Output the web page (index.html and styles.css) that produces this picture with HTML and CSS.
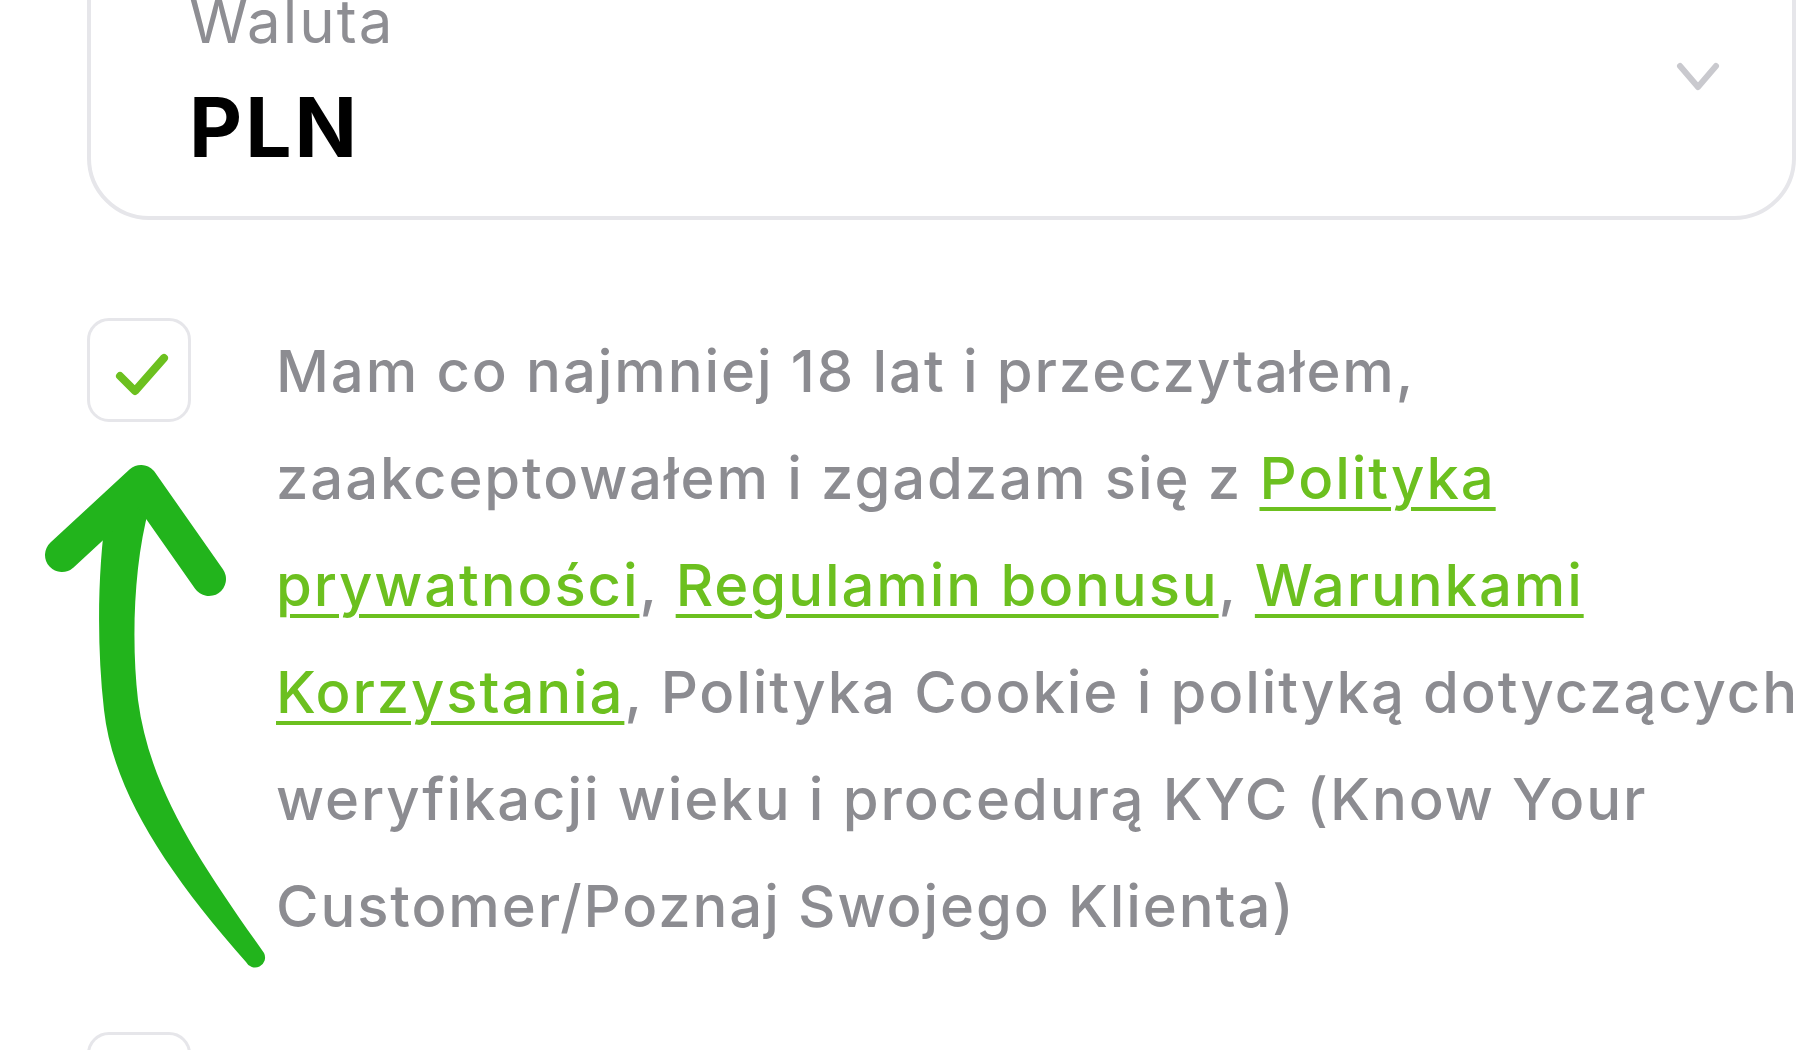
FILE: index.html
```html
<!DOCTYPE html>
<html lang="pl">
<head>
    <meta charset="UTF-8">
    <meta name="viewport" content="width=device-width, initial-scale=1.0">
    <title>Rejestracja</title>
    <link rel="stylesheet" href="styles.css">
</head>
<body>
    <main class="form">
        <div class="field">
            <div class="field-text">
                <span class="field-label">Waluta</span>
                <span class="field-value">PLN</span>
            </div>
            <svg class="chevron" width="44" height="30" viewBox="0 0 44 30">
                <polyline points="4,5 22,26 40,5" fill="none" stroke="#c9c9ce" stroke-width="6" stroke-linecap="round" stroke-linejoin="round"/>
            </svg>
        </div>

        <label class="consent">
            <span class="check checked">
                <svg width="98" height="98" viewBox="0 0 98 98">
                    <polyline points="30,55 45,70 74,37" fill="none" stroke="#6cc01f" stroke-width="8" stroke-linecap="round" stroke-linejoin="round"/>
                </svg>
            </span>
            <span class="consent-text">
                Mam co najmniej 18 lat i przeczytałem, zaakceptowałem i zgadzam się z <a href="#">Polityka prywatności</a>, <a href="#">Regulamin bonusu</a>, <a href="#">Warunkami Korzystania</a>, Polityka Cookie i polityką dotyczących weryfikacji wieku i procedurą KYC (Know Your Customer/Poznaj Swojego Klienta)
            </span>
        </label>

        <label class="consent">
            <span class="check"></span>
            <span class="consent-text"></span>
        </label>
    </main>

    <!-- strzałka wskazująca checkbox -->
    <svg class="hint-arrow" width="300" height="1000" viewBox="0 0 300 1000">
        <path d="M108 500 C 98 560, 96 640, 104 710 C 113 790, 165 870, 246 962 A 10 10 0 0 0 264 953 C 200 862, 150 790, 138 700 C 131 640, 134 560, 150 505 Z" fill="#22b41c"/>
        <polyline points="62,555 141,482 209,579" fill="none" stroke="#22b41c" stroke-width="34" stroke-linecap="round" stroke-linejoin="round"/>
    </svg>
</body>
</html>
```

FILE: styles.css
```css
/* Général */
* {
    margin: 0;
    padding: 0;
    box-sizing: border-box;
}

body {
    font-family: 'Inter', 'Noto Sans', sans-serif;
    background-color: #fff;
    color: #000;
    overflow: hidden;
}

.form {
    margin-top: -60px;
    padding: 0 0 0 87px;
}

/* Pole wyboru waluty */
.field {
    display: flex;
    align-items: center;
    justify-content: space-between;
    margin-right: 4px;
    border: 4px solid #e6e6ea;
    border-radius: 62px;
    padding: 42px 72px 38px 98px;
}

.field-text {
    display: flex;
    flex-direction: column;
    gap: 22px;
}

.field-label {
    font-size: 60px;
    line-height: 70px;
    letter-spacing: 2px;
    color: #8e8e93;
}

.field-value {
    font-size: 82px;
    line-height: 100px;
    font-weight: 700;
    letter-spacing: 3px;
    color: #000;
}

.chevron {
    margin-top: -12px;
}

/* Zgody */
.consent {
    display: flex;
    align-items: flex-start;
    gap: 85px;
    margin-top: 98px;
}

.consent + .consent {
    margin-top: 72px;
}

.check {
    flex: none;
    width: 104px;
    height: 104px;
    border: 3px solid #e6e6ea;
    border-radius: 22px;
    background-color: #fff;
}

.consent-text {
    font-size: 58px;
    line-height: 107px;
    font-weight: 500;
    letter-spacing: 1.9px;
    color: #8c8c91;
}

.consent-text a {
    color: #6cc01f;
    text-decoration: underline;
    text-decoration-thickness: 4px;
    text-underline-offset: 8px;
}

.hint-arrow {
    position: absolute;
    top: 0;
    left: 0;
}
```
